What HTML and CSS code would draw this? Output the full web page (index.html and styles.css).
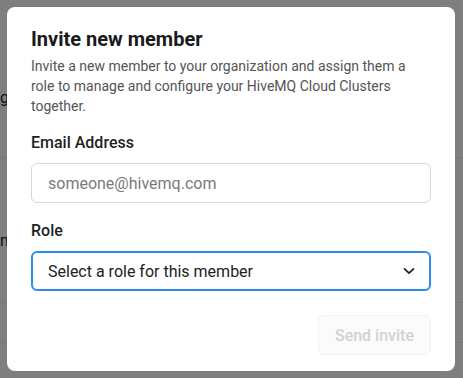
FILE: index.html
```html
<!DOCTYPE html>
<html lang="en">
<head>
<meta charset="utf-8">
<title>Invite new member</title>
<link rel="stylesheet" href="styles.css">
</head>
<body>
<div class="page">
  <div class="page-row page-row-first"><span class="page-text">g</span></div>
  <div class="page-row page-row-second"><span class="page-text">m</span></div>
  <div class="page-row page-row-third"></div>
  <div class="page-row page-row-fourth"></div>
</div>
<div class="overlay"></div>
<div class="modal" role="dialog" aria-labelledby="invite-title">
  <h2 class="modal-title" id="invite-title">Invite new member</h2>
  <p class="modal-desc">Invite a new member to your organization and assign them a role to manage and configure your HiveMQ Cloud Clusters together.</p>
  <div class="field">
    <label class="field-label" for="email">Email Address</label>
    <div class="input"><span class="placeholder">someone@hivemq.com</span></div>
  </div>
  <div class="field">
    <label class="field-label" for="role">Role</label>
    <div class="select">
      <span class="select-value">Select a role for this member</span>
      <svg class="chevron" width="12" height="8" viewBox="0 0 12 8" aria-hidden="true"><path d="M1.5 1.8 L6 6.2 L10.5 1.8" fill="none" stroke="#222" stroke-width="1.7" stroke-linecap="round" stroke-linejoin="round"/></svg>
    </div>
  </div>
  <div class="actions">
    <button class="btn-send" disabled>Send invite</button>
  </div>
</div>
</body>
</html>
```

FILE: styles.css
```css
* { box-sizing: border-box; }
html, body { margin: 0; padding: 0; }
body {
  width: 463px;
  height: 378px;
  overflow: hidden;
  position: relative;
  background: #ffffff;
  font-family: Roboto, "Noto Sans", Arial, sans-serif;
}
.page {
  display: flex;
  flex-direction: column;
}
.page-row {
  border-bottom: 1px solid #ececec;
  display: flex;
  align-items: center;
  font-size: 16px;
  color: #222;
  white-space: nowrap;
}
.page-row-first { height: 158px; padding-top: 38px; }
.page-row-second { height: 145px; padding-top: 20px; }
.page-row-third { height: 40px; }
.page-row-fourth { height: 40px; border-bottom: none; }
.page-text { margin-left: 0; }
.overlay {
  position: absolute;
  inset: 0;
  background: rgba(0, 0, 0, 0.5);
}
.modal {
  position: absolute;
  left: 7px;
  top: 7px;
  width: 448px;
  height: 364px;
  background: #fff;
  border-radius: 8px;
  padding: 20px 24px 16px;
  display: flex;
  flex-direction: column;
}
.modal-title {
  margin: 0;
  font-size: 20px;
  line-height: 24px;
  font-weight: 700;
  color: #1a1a1a;
}
.modal-desc {
  margin: 5px 0 0;
  font-size: 14px;
  line-height: 20px;
  color: #555;
}
.field {
  display: flex;
  flex-direction: column;
  gap: 8px;
  margin-top: 15px;
}
.field + .field { margin-top: 16px; }
.field-label {
  font-size: 16px;
  line-height: 24px;
  font-weight: 500;
  color: #1f1f1f;
}
.input {
  height: 40px;
  border: 1px solid #d8d8d8;
  border-radius: 6px;
  padding: 0 16px;
  display: flex;
  align-items: center;
}
.placeholder {
  font-size: 16px;
  color: #7a7a7a;
}
.select {
  height: 40px;
  border: 2px solid #2b8ee8;
  border-radius: 6px;
  padding: 0 15px;
  display: flex;
  align-items: center;
  justify-content: space-between;
}
.select-value {
  font-size: 16px;
  color: #222;
}
.chevron { margin-right: -1px; }
.actions {
  margin-top: 24px;
  display: flex;
  justify-content: flex-end;
}
.btn-send {
  height: 40px;
  padding: 0 16px;
  font-family: inherit;
  font-size: 16px;
  font-weight: 500;
  color: #d2d2d2;
  background: #fbfbfb;
  border: 1px solid #f1f1f1;
  border-radius: 6px;
}
```
